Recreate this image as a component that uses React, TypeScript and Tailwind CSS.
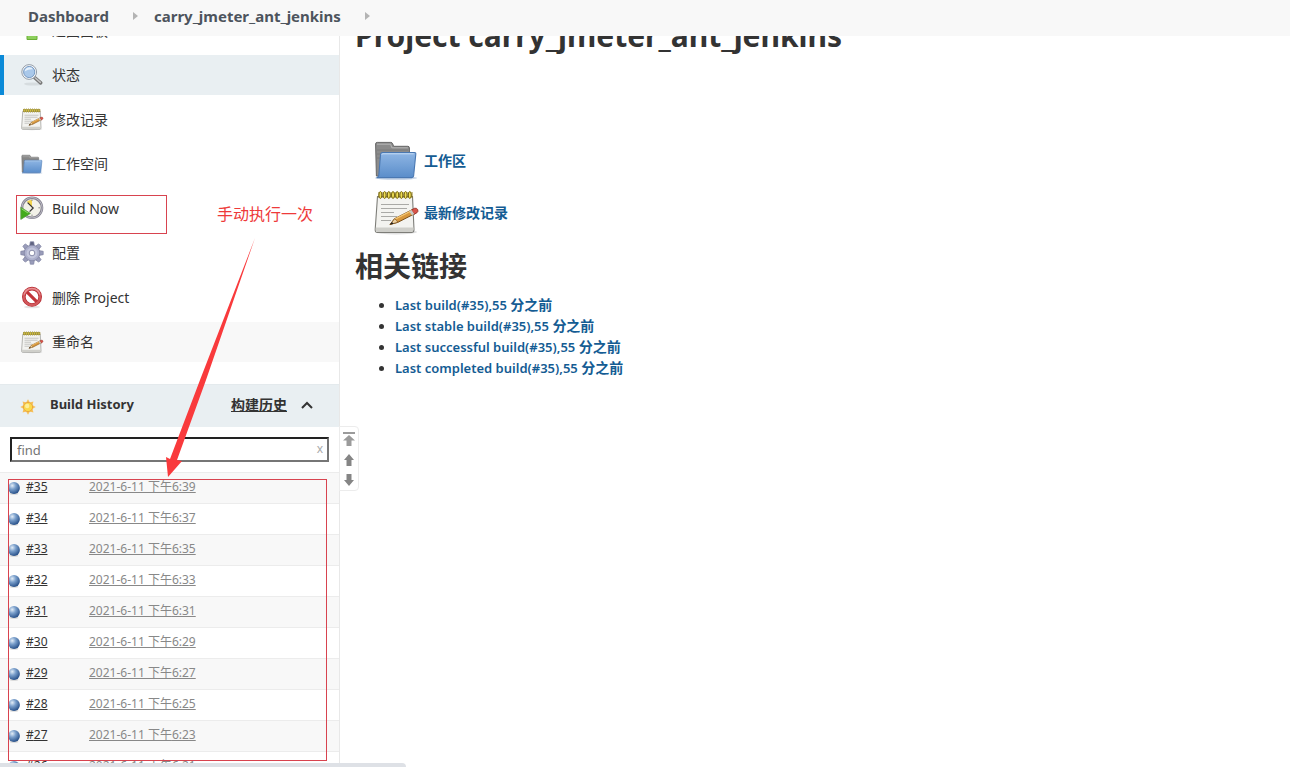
import { useState } from "react";
import type { ReactNode } from "react";

type IconProps = { className?: string };

const SearchIcon = ({ className }: IconProps) => (
  <svg viewBox="0 0 24 24" className={className} aria-hidden="true">
    <ellipse cx="13" cy="21" rx="9" ry="1.6" fill="#000" opacity="0.08" />
    <path d="M14.5 14.5l6.2 5.4" stroke="#777" strokeWidth="3.6" strokeLinecap="round" />
    <path d="M15.4 15l5 4.4" stroke="#c4c4c4" strokeWidth="1.4" strokeLinecap="round" />
    <circle cx="9.2" cy="9" r="7.4" fill="#f4f6f8" stroke="#8a94a0" strokeWidth="0.9" />
    <circle cx="9.2" cy="9" r="5.6" fill="#a9c8ea" stroke="#6f93bd" strokeWidth="0.9" />
    <path d="M4.6 8.4a4.7 4.7 0 0 1 8.6-2c-3-.4-5.4.6-8.6 2z" fill="#e6f1fc" />
  </svg>
);

const NotepadIcon = ({ className }: IconProps) => (
  <svg viewBox="0 0 48 48" className={className} aria-hidden="true">
    <ellipse cx="24" cy="44" rx="21" ry="2.4" fill="#000" opacity="0.12" />
    <path d="M5.5 8.5h35l1.5 33q0 3-2.6 3H5.6q-2.6 0-2.4-3z" fill="#f3f3f0" stroke="#7d7d78" strokeWidth="1.1" />
    <path d="M3.8 39.5h37.6v2.6q0 1.8-2 1.8H5.6q-2 0-1.9-1.8z" fill="#cfcfca" />
    <path d="M9 16.5h28M9 20.5h26M9 24.5h13M9 28.5h16M9 32.5h10" stroke="#a9a9a6" strokeWidth="1.2" />
    <rect x="6" y="4" width="35" height="6" fill="#8e7b16" opacity="0.45" />
    {[7, 11.2, 15.4, 19.6, 23.8, 28, 32.2, 36.4].map((x) => (
      <ellipse key={x} cx={x + 1.4} cy="7" rx="1.5" ry="3.4" fill="#f0df55" stroke="#716010" strokeWidth="1" />
    ))}
    <path d="M18 36.5l4.6-5.8L40.5 21.5l2.6 4-17.200 8.800z" fill="#d8973c" stroke="#7b4d16" strokeWidth="1" />
    <path d="M23 31.200L40.600 22.200" stroke="#f3c674" strokeWidth="1.400" />
    <path d="M18 36.500l4.600-5.800q2.200 1.400 3.300 3.600z" fill="#ecd0a0" stroke="#7b4d16" strokeWidth="0.700" />
    <path d="M18 36.500l2-2.600 1.600 1.900z" fill="#222" />
    <path d="M39.400 22l3-1.700q2.200-.6 3.300 1.200.9 2-.7 3.200l-2.800 1.600z" fill="#d9544a" stroke="#8c2a20" strokeWidth="0.800" />
    <path d="M37.200 23.200l2.400-1.300 2.700 4.200-2.400 1.200z" fill="#c9c9c4" />
  </svg>
);

const FolderIcon = ({ className }: IconProps) => (
  <svg viewBox="0 0 48 48" className={className} aria-hidden="true">
    <defs>
      <linearGradient id="folderFront" x1="0" y1="0" x2="0" y2="1">
        <stop offset="0" stopColor="#8fb6e4" />
        <stop offset="1" stopColor="#5a8dca" />
      </linearGradient>
    </defs>
    <ellipse cx="24" cy="42" rx="21" ry="2" fill="#3465a4" opacity="0.25" />
    <path d="M3.6 8q0-1.6 1.600-1.600h13.600q1.400 0 1.900 1.400l.9 2.500h14.200q1.600 0 1.600 1.600V40H4.400z" fill="#8b8b8b" stroke="#666" strokeWidth="1" />
    <path d="M5 8.200h13.600l1.200 3.600h16" stroke="#b5b5b5" strokeWidth="1" fill="none" />
    <path d="M5 14h31M5 18h5M5 22h4" stroke="#777" strokeWidth="0.800" />
    <path d="M8.600 18.200q.2-1.700 1.900-1.700h32q1.500 0 1.300 1.600L41.600 40q-.2 1.600-1.900 1.600H4.600q2-.4 2.200-2.200z" fill="url(#folderFront)" stroke="#4a78b2" strokeWidth="1.100" />
    <path d="M9.800 18.800q.1-1 1.100-1h30.800" stroke="#c4daf3" strokeWidth="1" fill="none" />
  </svg>
);

const BuildIcon = ({ className }: IconProps) => (
  <svg viewBox="0 0 24 24" className={className} aria-hidden="true">
    <circle cx="12" cy="11.8" r="10" fill="#f2f1e8" stroke="#85838f" strokeWidth="2.6" />
    <circle cx="12" cy="11.8" r="10.2" fill="none" stroke="#c2c1cc" strokeWidth="0.9" />
    <path d="M12 11.8L7 5.600q2.200-1.800 5-1.800z" fill="#f2d44e" />
    <path d="M7.600 6.600l5.600 5.400-3.600 3.600" stroke="#333" strokeWidth="1.200" fill="none" />
    <path d="M12 3.400v1.600M20 11.800h-1.600M12 20v-1.400" stroke="#888" strokeWidth="1" />
    <path d="M0.800 11.200l9.600 6.200-9.600 6z" fill="#43ab1c" stroke="#5b9a45" strokeWidth="0.800" />
    <path d="M1.600 12.800l6.400 4.200" stroke="#93dc70" strokeWidth="1" />
  </svg>
);

const GearIcon = ({ className }: IconProps) => (
  <svg viewBox="0 0 24 24" className={className} aria-hidden="true">
    {[0, 45, 90, 135, 180, 225, 270, 315].map((deg) => (
      <path
        key={deg}
        d="M9.600 5.200l.7-4.400h3.400l.7 4.400z"
        fill={deg === 0 ? "#5f6380" : "#9a9dba"}
        stroke="#7e81a0"
        strokeWidth="0.700"
        transform={`rotate(${deg} 12 12)`}
      />
    ))}
    <circle cx="12" cy="12" r="7.800" fill="#adb0cc" stroke="#8588a6" strokeWidth="0.800" />
    <circle cx="12" cy="12" r="5.400" fill="#c3c6dc" />
    <circle cx="12" cy="12" r="2.800" fill="#fff" stroke="#8a8daa" strokeWidth="1" />
  </svg>
);

const DeleteIcon = ({ className }: IconProps) => (
  <svg viewBox="0 0 24 24" className={className} aria-hidden="true">
    <ellipse cx="12" cy="22" rx="8" ry="1.3" fill="#000" opacity="0.1" />
    <circle cx="12" cy="11.8" r="8.2" fill="#fff" stroke="#b52a30" strokeWidth="3.600" />
    <path d="M6.400 6.400l11 11" stroke="#c0343a" strokeWidth="3.200" />
    <circle cx="12" cy="11.8" r="8.2" fill="none" stroke="#d2585c" strokeWidth="2.200" />
    <path d="M4 9.600a8.300 8.300 0 0 1 16 0" stroke="#e79093" strokeWidth="1.400" fill="none" />
  </svg>
);

const UpIcon = ({ className }: IconProps) => (
  <svg viewBox="0 0 24 24" className={className} aria-hidden="true">
    <path d="M12 3l9 10h-4v8.500H7V13H3z" fill="#8ccf5c" stroke="#6aae35" />
  </svg>
);

const SunIcon = ({ className }: IconProps) => (
  <svg viewBox="0 0 16 16" className={className} aria-hidden="true">
    {[0, 45, 90, 135, 180, 225, 270, 315].map((deg) => (
      <path key={deg} d="M6 3.800L8 .3l2 3.500z" fill="#f6c05a" transform={`rotate(${deg} 8 8)`} />
    ))}
    <circle cx="8" cy="8" r="4.600" fill="#fbd94b" stroke="#e8a33a" strokeWidth="0.900" />
    <circle cx="7.200" cy="7" r="2.200" fill="#fdee9a" />
  </svg>
);

const BallIcon = ({ className }: IconProps) => (
  <svg viewBox="0 0 12 14" className={className} aria-hidden="true">
    <defs>
      <radialGradient id="ball" cx="0.35" cy="0.3" r="0.75">
        <stop offset="0" stopColor="#e3edf7" />
        <stop offset="0.4" stopColor="#7ba0cc" />
        <stop offset="1" stopColor="#234c86" />
      </radialGradient>
    </defs>
    <ellipse cx="6" cy="12.8" rx="4.4" ry="1" fill="#000" opacity="0.15" />
    <circle cx="6" cy="7" r="5.900" fill="url(#ball)" />
  </svg>
);

const Separator = () => (
  <svg viewBox="0 0 5 8" className="h-2 w-[5px]" aria-hidden="true">
    <path d="M0 0l5 4-5 4z" fill="#b4b4b4" />
  </svg>
);

const tasks: { label: string; icon: ReactNode; state?: "active" | "hover" }[] = [
  { label: "返回面板", icon: <UpIcon className="size-6" /> },
  { label: "状态", icon: <SearchIcon className="size-6" />, state: "active" },
  { label: "修改记录", icon: <NotepadIcon className="size-6" /> },
  { label: "工作空间", icon: <FolderIcon className="size-6" /> },
  { label: "Build Now", icon: <BuildIcon className="size-6" /> },
  { label: "配置", icon: <GearIcon className="size-6" /> },
  { label: "删除 Project", icon: <DeleteIcon className="size-6" /> },
  { label: "重命名", icon: <NotepadIcon className="size-6" />, state: "hover" },
];

const taskStyles = {
  active: "border-[#0b8ad8] bg-[#e9eff2]",
  hover: "border-transparent bg-[#f8f8f8]",
  none: "border-transparent",
};

const builds = [
  { id: 35, time: "6:39" },
  { id: 34, time: "6:37" },
  { id: 33, time: "6:35" },
  { id: 32, time: "6:33" },
  { id: 31, time: "6:31" },
  { id: 30, time: "6:29" },
  { id: 29, time: "6:27" },
  { id: 28, time: "6:25" },
  { id: 27, time: "6:23" },
  { id: 26, time: "6:21" },
];

const permalinks = ["Last build", "Last stable build", "Last successful build", "Last completed build"];

const Breadcrumbs = () => (
  <nav className="flex h-9 shrink-0 items-center bg-[#f8f8f8] pb-1 pl-7 text-[15px] font-bold text-[#4d545d]">
    <a href="#dashboard" className="mr-6">Dashboard</a>
    <Separator />
    <a href="#project" className="mr-6 ml-4">carry_jmeter_ant_jenkins</a>
    <Separator />
  </nav>
);

const TaskList = () => (
  <ul className="-mt-[26px] flex h-[352px] flex-col justify-between">
    {tasks.map((task) => (
      <li key={task.label}>
        <a
          href="#task"
          className={`flex h-10 items-center gap-2 border-l-4 pl-4 text-[14px] ${taskStyles[task.state ?? "none"]}`}
        >
          {task.icon}
          <span>{task.label}</span>
        </a>
      </li>
    ))}
  </ul>
);

const PageNav = () => (
  <div className="absolute top-[42px] left-full flex h-[65px] w-5 flex-col items-center justify-center gap-2 rounded-r border border-[#ececec] bg-white text-[#858585]">
    <button aria-label="Newest builds">
      <svg viewBox="0 0 12 14" className="h-[14px] w-3" fill="#9b9b9b">
        <path d="M0 0h12v2H0zM6 3l6 5.500H8.500V14h-5V8.500H0z" />
      </svg>
    </button>
    <button aria-label="Newer builds">
      <svg viewBox="0 0 10 12" className="h-3 w-[10px]" fill="currentColor">
        <path d="M5 0l5 6H7.500v6h-5V6H0z" />
      </svg>
    </button>
    <button aria-label="Older builds">
      <svg viewBox="0 0 10 12" className="h-3 w-[10px]" fill="currentColor">
        <path d="M5 12l5-6H7.500V0h-5v6H0z" />
      </svg>
    </button>
  </div>
);

const BuildHistory = () => {
  const [query, setQuery] = useState("");
  const rows = builds.filter((b) => `#${b.id}`.includes(query));

  return (
    <section className="relative mt-[22px]">
      <div className="flex h-[43px] items-center border-t border-[#e4eaed] bg-[#e9eff2] pr-[26px] pb-[2px] pl-5">
        <SunIcon className="mt-1 mr-[14px] size-4" />
        <h2 className="flex-1 text-[13px] font-bold">Build History</h2>
        <a href="#trend" className="mr-[14px] pb-[2px] text-[14px] font-semibold underline">构建历史</a>
        <button aria-label="Collapse">
          <svg viewBox="0 0 12 8" className="h-2 w-3" fill="none" stroke="#333" strokeWidth="2">
            <path d="M1 7l5-5 5 5" />
          </svg>
        </button>
      </div>

      {/* Filter */}
      <div className="relative px-[10px] py-[10px]">
        <input
          type="text"
          aria-label="find"
          placeholder="find"
          value={query}
          onChange={(e) => setQuery(e.target.value)}
          className="block h-[25px] w-full border-2 border-t-[#222] border-r-[#767676] border-b-[#767676] border-l-[#222] bg-white px-[5px] text-[13px] outline-none placeholder:text-[#757575]"
        />
        <button
          aria-label="Clear"
          onClick={() => setQuery("")}
          className="absolute top-3 right-4 text-[12px] leading-5 text-[#aaa]"
        >
          x
        </button>
      </div>

      <table className="w-full text-[12px]">
        <tbody>
          {rows.map((b) => (
            <tr key={b.id} className="h-[31px] border-t border-[#ececec] odd:bg-[#f8f8f8]">
              <td className="w-[89px] p-0 pb-px pl-2">
                <div className="flex items-center gap-[6px] leading-4">
                  <BallIcon className="h-[14px] w-3" />
                  <a href="#build" className="pb-px underline">#{b.id}</a>
                </div>
              </td>
              <td className="p-0 pb-[2px] leading-4">
                <a href="#build" className="text-[#888] underline">2021-6-11 下午{b.time}</a>
              </td>
            </tr>
          ))}
        </tbody>
      </table>

      <PageNav />
    </section>
  );
};

const ProjectPage = () => (
  <main className="min-w-0 flex-1 pl-[15px]">
    <h1 className="-mt-5 text-[30px] leading-10 font-bold">Project carry_jmeter_ant_jenkins</h1>
    <div className="mt-20 flex flex-col gap-1 pl-[17px] text-[14px] font-semibold text-[#145c93]">
      <a href="#workspace" className="flex items-center gap-1">
        <FolderIcon className="size-12" />
        工作区
      </a>
      <a href="#changes" className="flex items-center gap-1">
        <NotepadIcon className="size-12" />
        最新修改记录
      </a>
    </div>
    <h2 className="mt-[10px] text-[28px] leading-10 font-bold">相关链接</h2>
    <ul className="mt-[9px] list-disc pl-10 text-[13px] leading-[21px]">
      {permalinks.map((name) => (
        <li key={name}>
          <a href="#permalink" className="font-semibold text-[#145c93]">
            {name}(#35),55 <span className="text-[14px] leading-none">分之前</span>
          </a>
        </li>
      ))}
    </ul>
  </main>
);

const Annotations = () => (
  <div className="pointer-events-none absolute inset-0 z-20">
    <div className="absolute top-[195px] left-4 h-[39px] w-[151px] border border-[#d8434f]" />
    <p className="absolute top-[202px] left-[217px] text-[16px] leading-6 text-[#ee3a3a]">手动执行一次</p>
    <svg viewBox="0 0 92 240" className="absolute top-[238px] left-[165px] h-[240px] w-[92px]" aria-hidden="true">
      <path d="M90 0L35 142 5 221 1 219l2 20 14-16-5-1L41 142z" fill="#f93a3c" />
    </svg>
    <div className="absolute top-[479px] left-2 h-[282px] w-[319px] border border-[#d8434f]" />
  </div>
);

export default function App() {
  return (
    <div className="relative flex h-screen flex-col overflow-hidden bg-white font-['Noto_Sans','Noto_Sans_CJK_SC',sans-serif] text-[#333]">
      <Breadcrumbs />
      <div className="flex min-h-0 flex-1 overflow-hidden">
        <aside className="w-[340px] shrink-0 border-r border-[#e8e8e8]">
          <TaskList />
          <BuildHistory />
        </aside>
        <ProjectPage />
      </div>
      <Annotations />
      {/* Browser status bubble */}
      <div className="absolute bottom-0 left-0 z-30 h-1 w-[406px] rounded-tr bg-[#dee1e6]" />
    </div>
  );
}
